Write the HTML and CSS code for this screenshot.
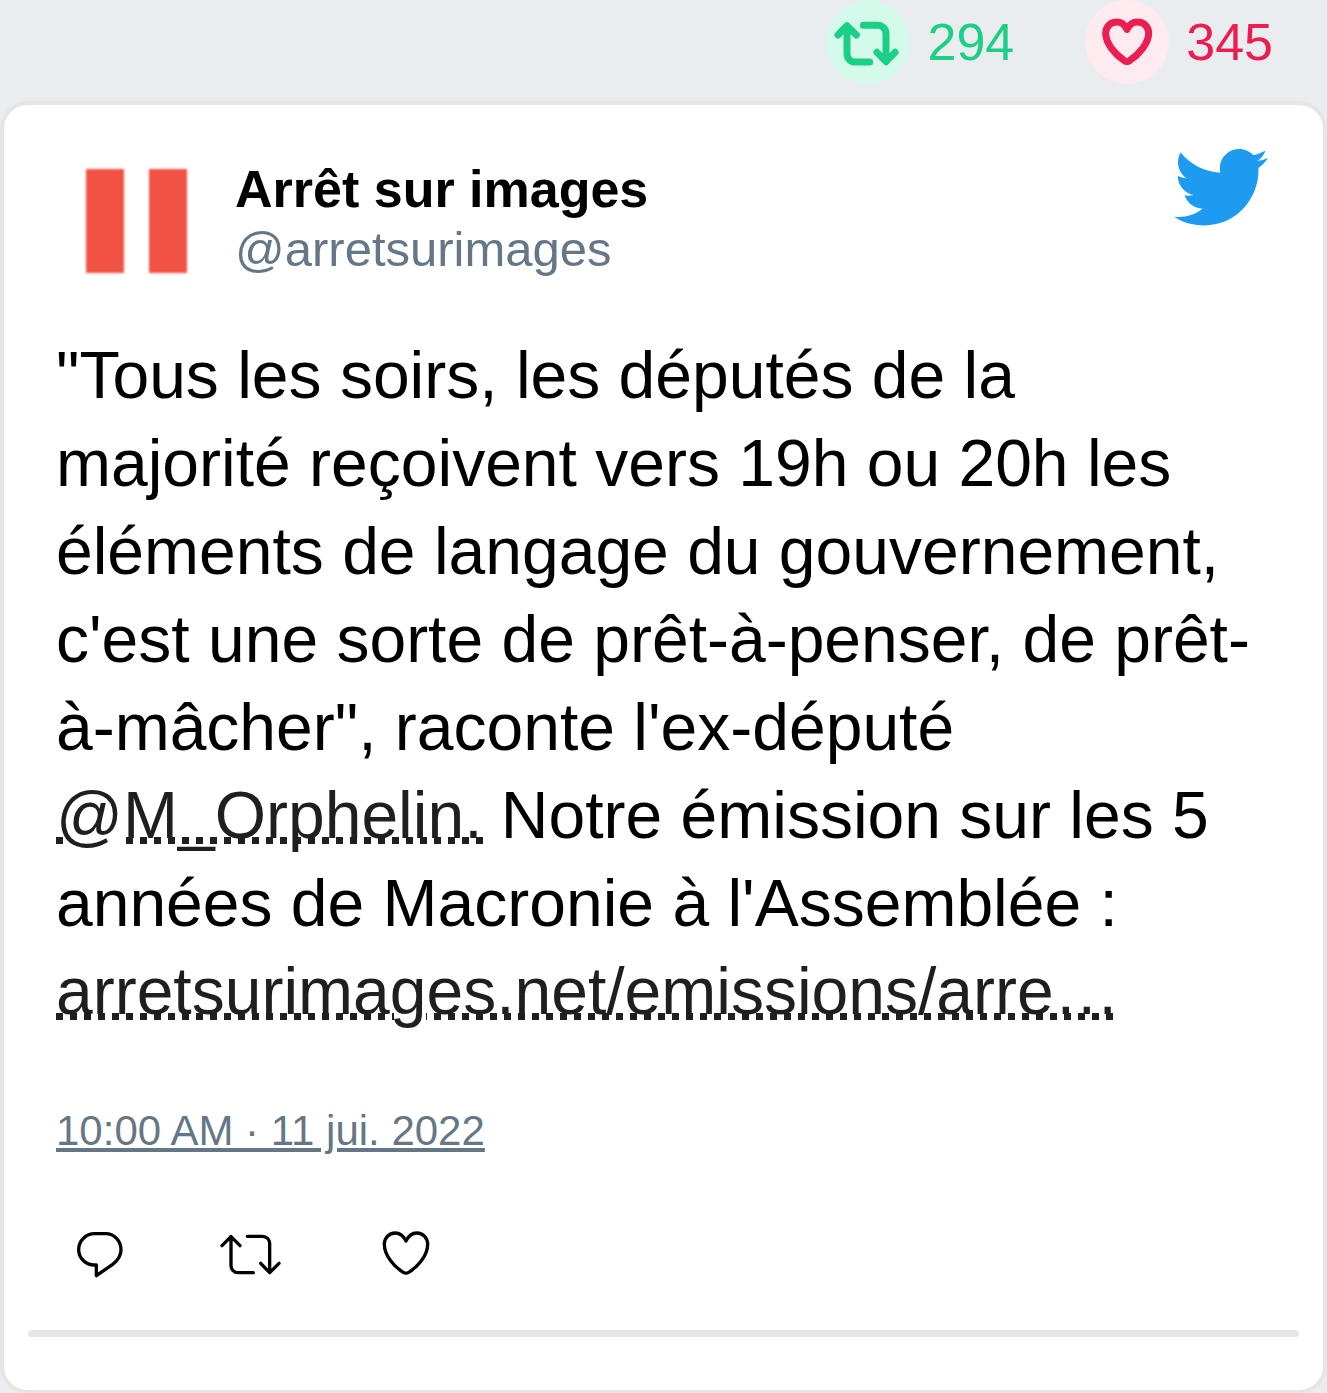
FILE: index.html
```html
<!DOCTYPE html>
<html lang="fr">
<head>
<meta charset="utf-8">
<meta name="viewport" content="width=device-width, initial-scale=1">
<title>Arrêt sur images</title>
<link rel="stylesheet" href="styles.css">
</head>
<body>
<header class="stats">
  <div class="stat stat-retweets">
    <svg class="stat-icon" viewBox="0 0 252 252" aria-hidden="true"><path d="M63 78V162A24 24 0 0 0 87 186H131M36 105 63 77 91 105M112 76H155A25 25 0 0 1 180 101V184M153 157 180 185 207 157"/></svg>
    <span>294</span>
  </div>
  <div class="stat stat-likes">
    <svg class="stat-icon" viewBox="0 0 252 252" aria-hidden="true"><path d="M126 88C118 72 106 66 96 66C76 66 62 80 62 100C62 130 90 163 118 182Q126 187 134 182C162 163 191 130 191 100C191 80 177 66 157 66C146 66 134 72 126 88Z"/></svg>
    <span>345</span>
  </div>
</header>
<article class="tweet">
  <div class="content">
    <div class="author">
      <svg class="avatar" viewBox="0 0 161 161" aria-hidden="true">
        <circle cx="80" cy="80" r="80" fill="#fefffe"/>
        <path class="avatar-bar" d="M30 29H68V133H30ZM93 29H131V133H93Z"/>
      </svg>
      <div class="names">
        <div class="name">Arrêt sur images</div>
        <div class="handle">@arretsurimages</div>
      </div>
      <svg class="bird" viewBox="0.94 2.75 23.4 18.6" aria-hidden="true"><path d="M23.643 4.937c-.835.37-1.732.62-2.675.733.962-.576 1.7-1.49 2.048-2.578-.9.534-1.897.922-2.958 1.13-.85-.904-2.06-1.47-3.4-1.47-2.572 0-4.658 2.086-4.658 4.66 0 .364.042.718.12 1.06-3.873-.195-7.304-2.05-9.602-4.868-.4.69-.63 1.49-.63 2.342 0 1.616.823 3.043 2.072 3.878-.764-.025-1.482-.234-2.11-.583v.06c0 2.257 1.605 4.14 3.737 4.568-.392.106-.803.162-1.227.162-.3 0-.593-.028-.877-.082.593 1.85 2.313 3.198 4.352 3.234-1.595 1.25-3.604 1.995-5.786 1.995-.376 0-.747-.022-1.112-.065 2.062 1.323 4.51 2.093 7.14 2.093 8.57 0 13.255-7.098 13.255-13.254 0-.2-.005-.402-.014-.602.91-.658 1.7-1.477 2.323-2.41z"/></svg>
    </div>
    <p class="text">"Tous les soirs, les députés de la majorité reçoivent vers 19h ou 20h les éléments de langage du gouvernement, c'est une sorte de prêt-à-penser, de prêt-à-mâcher", raconte l'ex-député <a class="link" href="#"><span class="skip">@</span>M_Orphelin.</a> Notre émission sur les 5 années de Macronie à l'Assemblée : <a class="link" href="#">arretsurima<span class="skip">g</span>es.net/emissions/arre…</a></p>
    <a class="date" href="#">10:00 AM · 11 jui. 2022</a>
    <div class="actions">
      <button class="action" type="button" aria-label="Répondre"><svg class="action-icon" viewBox="0 0 144 144"><path d="M57 11H89A46 48 0 0 1 135 59C135 77 124 92 110 103L61 137V105H55A47 46 0 0 1 8 59A48 48 0 0 1 57 11Z"/></svg></button>
      <button class="action" type="button" aria-label="Retweeter"><svg class="action-icon action-icon-wide" viewBox="0 0 198 144"><path d="M33 19V107A21 21 0 0 0 54 128H100M6 47 33 20 60 47M82 19H128A21 21 0 0 1 149 40V127M122 100 149 128 177 100"/></svg></button>
      <button class="action" type="button" aria-label="Aimer"><svg class="action-icon" viewBox="0 0 144 144"><path d="M72 33C64 17 52 9 40 9C20 9 7 24 7 43C7 77 37 111 64 127Q72 132 80 127C107 111 137 77 137 43C137 24 124 9 104 9C92 9 80 17 72 33Z"/></svg></button>
    </div>
  </div>
  <hr class="rule">
</article>
</body>
</html>
```

FILE: styles.css
```css
* {
  box-sizing: border-box;
}

body {
  margin: 0;
  background: #e9edf0;
  color: #000;
  font-family: "Liberation Sans", Arial, sans-serif;
}

svg {
  display: block;
  flex: none;
}

.stats {
  display: flex;
  justify-content: flex-end;
  gap: 71px;
  padding: 0 54px 17px 0;
}

.stat {
  display: flex;
  align-items: center;
  gap: 17px;
  font-size: 52px;
  line-height: 60px;
}

.stat-icon {
  width: 84px;
  height: 84px;
  border-radius: 50%;
  fill: none;
  stroke: currentColor;
  stroke-width: 21;
  stroke-linecap: round;
  stroke-linejoin: round;
}

.stat-retweets {
  color: #1bd085;
}

.stat-retweets .stat-icon {
  background: #d3faea;
}

.stat-likes {
  color: #ea1e51;
}

.stat-likes .stat-icon {
  background: #fdebf0;
}

.tweet {
  padding: 35px 24px 53px;
  border: 4px solid #e5e5e5;
  border-radius: 28px;
  background: #fff;
}

.content {
  padding: 0 28px;
}

.author {
  display: flex;
  align-items: center;
  gap: 18px;
}

.avatar {
  width: 161px;
  height: 161px;
}

.avatar-bar {
  fill: #f15244;
  filter: blur(1px);
}

.names {
  flex: 1;
  padding-bottom: 4px;
  line-height: 60px;
}

.name {
  font-size: 52px;
  font-weight: 700;
}

.handle {
  color: #657786;
  font-size: 49px;
}

.bird {
  align-self: flex-start;
  width: 97px;
  height: 77px;
  margin-top: 9px;
  fill: #1d9bf0;
}

.text {
  margin: 30px 0 72px;
  padding-right: 8px;
  font-size: 66px;
  line-height: 88px;
}

/* Underline of square dots, which the skip class interrupts under a descender */
.link {
  background: linear-gradient(90deg, #1f1f1f 50%, transparent 50%) 0 59px / 14px 7px repeat-x;
  color: #1f1f1f;
  text-decoration: none;
}

.skip {
  background: linear-gradient(#fff, #fff) 100% 59px / 90% 7px no-repeat;
}

.date {
  color: #657786;
  font-size: 42px;
  line-height: 48px;
}

.actions {
  display: flex;
  gap: 96px;
  margin-top: 75px;
  padding-left: 20px;
}

.action {
  padding: 0;
  border: 0;
  background: none;
  color: inherit;
}

.action-icon {
  width: 48px;
  height: 48px;
  fill: none;
  stroke: currentColor;
  stroke-width: 10;
  stroke-linecap: round;
  stroke-linejoin: round;
}

.action-icon-wide {
  width: 66px;
}

.rule {
  height: 7px;
  margin: 52px 0 0;
  border: 0;
  border-radius: 4px;
  background: #e5e5e5;
}
```
